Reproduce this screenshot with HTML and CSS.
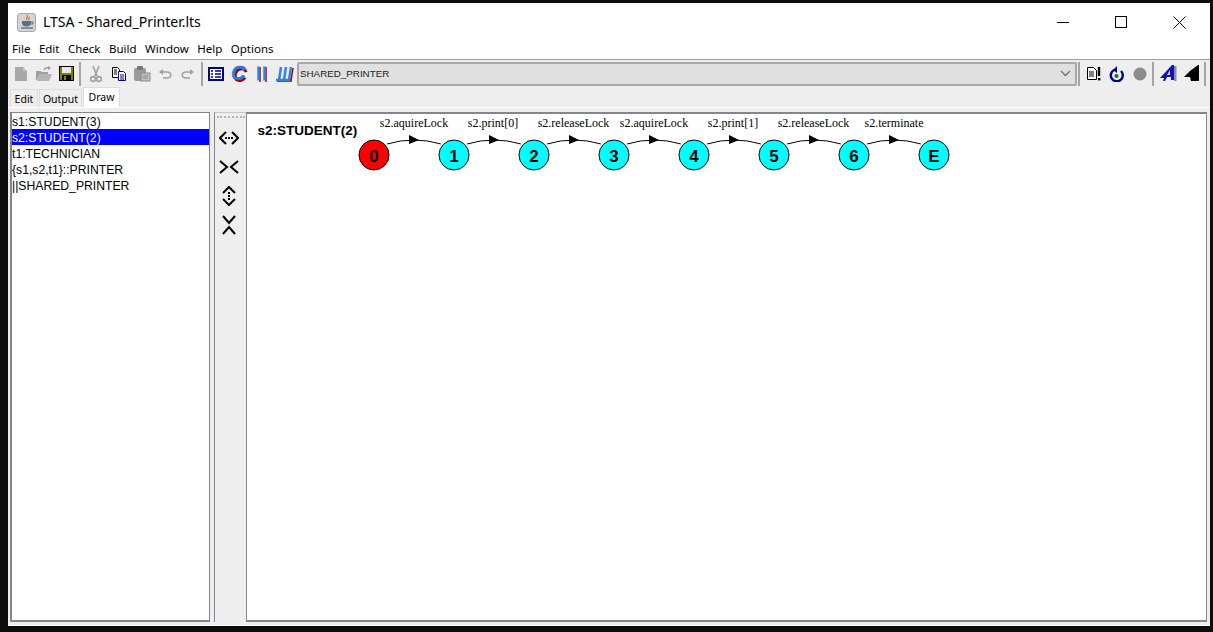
FILE: index.html
```html
<!DOCTYPE html>
<html lang="en">
<head>
<meta charset="UTF-8">
<meta name="viewport" content="width=device-width, initial-scale=1.0">
<title>LTSA - Shared_Printer.lts</title>
<link rel="stylesheet" href="styles.css">
</head>
<body>

<div class="window">

  <!-- title bar -->
  <div class="titlebar">
    <div class="appicon">
      <svg width="14" height="16" viewBox="0 0 14 16">
        <path d="M7 1c2 2-2 3 0 5M9 3c1 1-1 2 0 3" class="java-steam"/>
        <path d="M2 7h9v2a4 3 0 0 1-9 0z" class="java-cup"/>
        <path d="M11 8h2v2h-2" class="java-handle"/>
        <path d="M1 14h12" class="java-saucer"/>
      </svg>
    </div>
    <span class="title">LTSA - Shared_Printer.lts</span>
    <div class="winbuttons">
      <div class="winbutton"><span class="win-min"></span></div>
      <div class="winbutton"><span class="win-max"></span></div>
      <div class="winbutton">
        <svg width="13" height="13" viewBox="0 0 13 13"><path d="M.5.5l12 12M12.5.5l-12 12" class="win-close"/></svg>
      </div>
    </div>
  </div>

  <!-- menu -->
  <div class="menubar">
    <span>File</span><span>Edit</span><span>Check</span><span>Build</span><span>Window</span><span>Help</span><span>Options</span>
  </div>

  <!-- toolbar -->
  <div class="toolbar">
    <div class="tool"><svg width="16" height="16" viewBox="0 0 16 16"><path d="M2 1h8l4 4v10H2z" fill="#a9a9a9"/><path d="M10 1v4h4" fill="#c8c8c8"/></svg></div>
    <div class="tool"><svg width="18" height="16" viewBox="0 0 18 16"><path d="M1 5h5l1 1h6v2H5l-3 6H1z" fill="#a0a0a0"/><path d="M5 8h12l-3 7H2z" fill="#b4b4b4"/><path d="M9 4c1-2 3-3 5-2" fill="none" stroke="#999" stroke-width="1.4"/><path d="M13 0l3 2-3 2z" fill="#999"/></svg></div>
    <div class="tool"><svg width="15" height="15" viewBox="0 0 15 15"><rect width="15" height="15" fill="#000"/><rect x="1" y="1" width="13" height="13" fill="#808000"/><rect x="3" y="1" width="9" height="6" fill="#e8e8e8"/><rect x="3" y="9" width="9" height="6" fill="#000"/><rect x="5" y="10" width="2" height="4" fill="#808000"/></svg></div>
    <div class="sep sep-a"></div>
    <div class="tool"><svg width="12" height="18" viewBox="0 0 12 18"><path d="M3 1l4 10M9 1L5 11" class="tool-line"/><circle cx="3" cy="14" r="2.4" class="tool-line"/><circle cx="9" cy="14" r="2.4" class="tool-line"/></svg></div>
    <div class="tool"><svg width="16" height="16" viewBox="0 0 16 16"><path d="M1.500 1.500h5l2 2v8h-7z" fill="#fff" stroke="#000"/><path d="M3 4h3M3 6h3M3 8h3" stroke="#000"/><path d="M7.500 5.500h5l2 2v7h-7z" fill="#fff" stroke="#000080"/><path d="M9 9h4M9 11h4M9 13h4" stroke="#000080"/></svg></div>
    <div class="tool"><svg width="18" height="16" viewBox="0 0 18 16"><rect x="1" y="2" width="12" height="13" rx="2" fill="#9a9a9a"/><rect x="4" y="0" width="6" height="4" rx="1" fill="#777"/><rect x="8" y="7" width="9" height="8" fill="#c2c2c2" stroke="#888"/><path d="M10 10h5M10 12h5" stroke="#888"/></svg></div>
    <div class="tool"><svg width="14" height="12" viewBox="0 0 14 12"><path d="M3 4h6c5 0 5 6 0 6H5" class="tool-line"/><path d="M5 1L1 4l4 3z" fill="#a0a0a0"/></svg></div>
    <div class="tool"><svg width="14" height="12" viewBox="0 0 14 12"><path d="M11 4H5c-5 0-5 6 0 6h4" class="tool-line"/><path d="M9 1l4 3-4 3z" fill="#a0a0a0"/></svg></div>
    <div class="sep sep-b"></div>
    <div class="tool"><svg width="16" height="14" viewBox="0 0 16 14"><rect x="1" y="1" width="14" height="12" fill="#fff" stroke="#000080" stroke-width="2"/><path d="M3 4h2M3 7h2M3 10h2M7 4h6M7 7h6M7 10h6" stroke="#000080" stroke-width="1.500"/></svg></div>
    <div class="tool"><span class="glyph-c">C</span></div>
    <div class="tool"><svg width="12" height="16" viewBox="0 0 12 16"><path d="M4 1v15M10 1v15" class="bar-red"/><path d="M2.500 .5v14M8.500 .5v14" class="bar-blue"/></svg></div>
    <div class="tool"><svg width="20" height="16" viewBox="0 0 20 16"><path d="M6 1L4 14M11 1L9 14M16 1l-2 13" class="bar-blue"/><path d="M1 14h15" class="bar-blue"/><path d="M2 16h15M18 2l-2 13" class="bar-red"/></svg></div>
    <div class="combo">
      <span>SHARED_PRINTER</span>
      <svg width="11" height="7" viewBox="0 0 11 7"><path d="M1 1l4.500 4.500L10 1" class="combo-arrow"/></svg>
    </div>
    <div class="sep sep-c"></div>
    <div class="tool"><svg width="16" height="15" viewBox="0 0 16 15"><path d="M1.500 1.500h6l3 3v9h-9z" fill="#fff" stroke="#000"/><path d="M3 6h5M3 8h5M3 10h5" stroke="#000"/><path d="M13 1v9" stroke="#000" stroke-width="2.400"/><rect x="12" y="12" width="2.400" height="2.400" fill="#000"/></svg></div>
    <div class="tool"><svg width="15" height="16" viewBox="0 0 15 16"><path d="M5 4a6 6 0 1 0 7 1" fill="none" stroke="#000090" stroke-width="2.400"/><path d="M8 0v7L4 4z" fill="#000090"/><circle cx="7.500" cy="10" r="2" fill="#008000"/></svg></div>
    <div class="tool"><svg width="14" height="14" viewBox="0 0 14 14"><circle cx="7" cy="7" r="6.500" fill="#8c8c8c"/></svg></div>
    <div class="sep sep-d"></div>
    <div class="tool"><svg width="17" height="17" viewBox="0 0 17 17"><path d="M12 0h2v15h-3v-3H7l-2 4H3l1-3H0z" fill="#1010c0"/><path d="M10 5v5H7z" fill="#d8d8f0"/><rect x="14" y="1" width="2.500" height="15" fill="#909090"/></svg></div>
    <div class="tool"><svg width="16" height="17" viewBox="0 0 16 17"><path d="M14 0h1v16H7l-1-4H0l6-6z" fill="#000"/></svg></div>
    <div class="sep sep-e"></div>
  </div>

  <!-- tabs -->
  <div class="tabs">
    <div class="tab">Edit</div>
    <div class="tab">Output</div>
    <div class="tab active">Draw</div>
  </div>

  <div class="main">
    <div class="list">
      <div class="item">s1:STUDENT(3)</div>
      <div class="item selected">s2:STUDENT(2)</div>
      <div class="item">t1:TECHNICIAN</div>
      <div class="item">{s1,s2,t1}::PRINTER</div>
      <div class="item">||SHARED_PRINTER</div>
    </div>

    <div class="sidetools">
      <div class="grip"></div>
      <div class="sidetool">
        <svg width="20" height="14" viewBox="0 0 20 14"><path d="M7 1L1 7l6 6M13 1l6 6-6 6" class="arrow-line"/><path d="M6 6h2v2H6zM9 6h2v2H9zM12 6h2v2h-2z" class="arrow-dots"/></svg>
      </div>
      <div class="sidetool">
        <svg width="20" height="14" viewBox="0 0 20 14"><path d="M1 1l7 6-7 6M19 1l-7 6 7 6" class="arrow-line"/></svg>
      </div>
      <div class="sidetool">
        <svg width="14" height="20" viewBox="0 0 14 20"><path d="M1 7l6-6 6 6M1 13l6 6 6-6" class="arrow-line"/><path d="M6 6h2v2H6zM6 9h2v2H6zM6 12h2v2H6z" class="arrow-dots"/></svg>
      </div>
      <div class="sidetool">
        <svg width="14" height="20" viewBox="0 0 14 20"><path d="M1 1l6 7 6-7M1 19l6-7 6 7" class="arrow-line"/></svg>
      </div>
    </div>

    <div class="canvas">
      <svg class="graph" width="720" height="70" viewBox="246 112 720 70">
        <text x="257.500" y="135" class="graph-title">s2:STUDENT(2)</text>

        <path d="M387 144Q414 136 441 144" class="edge"/><path d="M409 135l10 5-10 4z"/>
        <path d="M467 144Q494 136 521 144" class="edge"/><path d="M489 135l10 5-10 4z"/>
        <path d="M547 144Q574 136 601 144" class="edge"/><path d="M569 135l10 5-10 4z"/>
        <path d="M627 144Q654 136 681 144" class="edge"/><path d="M649 135l10 5-10 4z"/>
        <path d="M707 144Q734 136 761 144" class="edge"/><path d="M729 135l10 5-10 4z"/>
        <path d="M787 144Q814 136 841 144" class="edge"/><path d="M809 135l10 5-10 4z"/>
        <path d="M867 144Q894 136 921 144" class="edge"/><path d="M889 135l10 5-10 4z"/>

        <text x="414" y="127" class="edge-label">s2.aquireLock</text>
        <text x="493" y="127" class="edge-label">s2.print[0]</text>
        <text x="573.500" y="127" class="edge-label">s2.releaseLock</text>
        <text x="654" y="127" class="edge-label">s2.aquireLock</text>
        <text x="733" y="127" class="edge-label">s2.print[1]</text>
        <text x="813.500" y="127" class="edge-label">s2.releaseLock</text>
        <text x="894" y="127" class="edge-label">s2.terminate</text>

        <circle cx="374" cy="155" r="15" class="node start"/><text x="374" y="162" class="node-label">0</text>
        <circle cx="454" cy="155" r="15" class="node"/><text x="454" y="162" class="node-label">1</text>
        <circle cx="534" cy="155" r="15" class="node"/><text x="534" y="162" class="node-label">2</text>
        <circle cx="614" cy="155" r="15" class="node"/><text x="614" y="162" class="node-label">3</text>
        <circle cx="694" cy="155" r="15" class="node"/><text x="694" y="162" class="node-label">4</text>
        <circle cx="774" cy="155" r="15" class="node"/><text x="774" y="162" class="node-label">5</text>
        <circle cx="854" cy="155" r="15" class="node"/><text x="854" y="162" class="node-label">6</text>
        <circle cx="934" cy="155" r="15" class="node"/><text x="934" y="162" class="node-label">E</text>
      </svg>
    </div>
  </div>

</div>

</body>
</html>
```

FILE: styles.css
```css
html, body {
  margin: 0;
  padding: 0;
  height: 100%;
}

body {
  background-color: #0c0c0c;
  box-sizing: border-box;
  height: 100vh;
  overflow: hidden;
  padding: 3px 3px 6px 8px;
  font-family: "Liberation Sans", Arial, sans-serif;
}

.window {
  background-color: #eeeeee;
  height: 100%;
  display: flex;
  flex-direction: column;
  border-bottom: 1px solid #ffffff;
  box-sizing: border-box;
}

/* title bar */
.titlebar {
  background-color: #fff;
  height: 38px;
  display: flex;
  align-items: center;
  padding-left: 9px;
}

.appicon {
  width: 19px;
  height: 19px;
  box-sizing: border-box;
  background-color: #d4d4d4;
  border: 1px solid #a8a8a8;
  border-radius: 3px;
  display: flex;
  align-items: center;
  justify-content: center;
}

.java-steam { fill: none; stroke: #d06a10; stroke-width: 1.2; }
.java-cup { fill: #5a7186; }
.java-handle { fill: none; stroke: #5a7186; }
.java-saucer { stroke: #5a7186; stroke-width: 1.4; }

.title {
  font-family: "Noto Sans", sans-serif;
  font-size: 14px;
  color: #000;
  margin-left: 7px;
  margin-top: -2px;
  flex: 1;
}

.winbuttons {
  display: flex;
  margin-right: 1px;
}

.winbutton {
  width: 58.500px;
  height: 30px;
  display: flex;
  align-items: center;
  justify-content: center;
}

.win-min {
  display: block;
  width: 12px;
  height: 1px;
  background-color: #000;
}

.win-max {
  display: block;
  width: 12px;
  height: 12px;
  box-sizing: border-box;
  border: 1px solid #000;
}

.win-close { stroke: #000; fill: none; }

/* menu */
.menubar {
  background-color: #fff;
  height: 18px;
  border-bottom: 1px solid #a0a0a0;
  display: flex;
  align-items: center;
  gap: 8.500px;
  padding-left: 4px;
  font-family: "Noto Sans", sans-serif;
  font-size: 11.500px;
  line-height: 16px;
  color: #000;
}

.menubar span {
  margin-top: -2px;
}

/* toolbar */
.toolbar {
  height: 28px;
  box-sizing: border-box;
  padding-bottom: 1px;
  display: flex;
  align-items: center;
  padding-left: 1px;
}

.tool {
  width: 23px;
  height: 24px;
  flex: none;
  display: flex;
  align-items: center;
  justify-content: center;
}

.tool-line { fill: none; stroke: #a0a0a0; stroke-width: 1.6; }

.sep {
  width: 2px;
  height: 24px;
  flex: none;
  background-color: #a4a4a4;
}

.sep-a { margin: 0 3px 0 1px; }
.sep-b { margin: 0 1px 0 2px; }
.sep-c { margin: 0 2px 0 1px; }
.sep-d { margin: 0 3px 0 1px; }
.sep-e { margin: 0 4px 0 1px; }

.glyph-c {
  font-family: "Liberation Sans", sans-serif;
  font-weight: bold;
  font-style: italic;
  font-size: 20px;
  color: #2f7de0;
  -webkit-text-stroke: 0.6px #1a60c8;
  text-shadow: 1.500px 1.500px 0 #a80000;
}

.bar-red { stroke: #a80000; stroke-width: 1.500; fill: none; }
.bar-blue { stroke: #2f86e0; stroke-width: 2.500; fill: none; }

.combo {
  flex: 1;
  height: 24px;
  margin-left: 1px;
  box-sizing: border-box;
  background-color: #e0e0e0;
  border: 2px solid #a8a8a8;
  border-radius: 2px;
  display: flex;
  align-items: center;
  justify-content: space-between;
  padding: 0 4px 0 1px;
  font-size: 9.800px;
  color: #222;
}

.combo-arrow { fill: none; stroke: #707070; stroke-width: 1.3; }

/* tabs */
.tabs {
  height: 20px;
  display: flex;
  align-items: flex-end;
  padding-left: 2px;
  border-bottom: 1px solid #ffffff;
  box-sizing: border-box;
  font-family: "Noto Sans", sans-serif;
  font-size: 10.500px;
  color: #000;
}

.tab {
  height: 18px;
  box-sizing: border-box;
  line-height: 18px;
  background-color: #eeeeee;
  border: 1px solid #dcdcdc;
  border-bottom: none;
  margin-right: 1px;
  text-align: center;
}

.tab:nth-child(1) { width: 28px; }
.tab:nth-child(2) { width: 43px; }

.tab.active {
  height: 20px;
  width: 37px;
  background-color: #fff;
  line-height: 18px;
}

/* main area */
.main {
  flex: 1;
  min-height: 0;
  display: flex;
  padding: 4px 3px 3px 2px;
}

.list {
  width: 200px;
  flex: none;
  box-sizing: border-box;
  background-color: #fff;
  border: 2px solid #85858c;
  border-top-width: 1px;
  border-right-width: 1px;
  margin-right: 4px;
  font-size: 12.200px;
  color: #000;
}

.item {
  height: 16px;
  line-height: 18px;
  white-space: nowrap;
}

.item.selected {
  background-color: #0000ff;
  color: #fff;
}

.sidetools {
  width: 32px;
  flex: none;
  box-sizing: border-box;
  border-left: 1px solid #85858c;
  border-top: 1px solid #c4c4c4;
  padding-right: 3px;
  display: flex;
  flex-direction: column;
  align-items: center;
}

.grip {
  width: 28px;
  height: 2px;
  margin-top: 3px;
  margin-bottom: 5px;
  margin-left: 3px;
  border-top: 2px dotted #b4b4b4;
  box-sizing: border-box;
}

.sidetool {
  height: 29px;
  display: flex;
  align-items: center;
  justify-content: center;
}

.arrow-line { fill: none; stroke: #000; stroke-width: 2; }
.arrow-dots { fill: #000; }

.canvas {
  flex: 1;
  background-color: #fff;
  border: 1px solid #85858c;
  border-top-width: 2px;
  border-bottom-width: 2px;
  box-sizing: border-box;
  overflow: hidden;
}

.graph {
  display: block;
  margin: -2px 0 0 -1px;
}

.graph-title {
  font-family: "Liberation Sans", sans-serif;
  font-weight: bold;
  font-size: 13.500px;
}

.edge { fill: none; stroke: #000; stroke-width: 1; }

.edge-label {
  font-family: "Liberation Serif", serif;
  font-size: 12px;
  text-anchor: middle;
}

.node { fill: #00ffff; stroke: #000; stroke-width: 1; }
.node.start { fill: #ff0000; }

.node-label {
  font-family: "Liberation Sans", sans-serif;
  font-weight: bold;
  font-size: 17px;
  text-anchor: middle;
}
```
